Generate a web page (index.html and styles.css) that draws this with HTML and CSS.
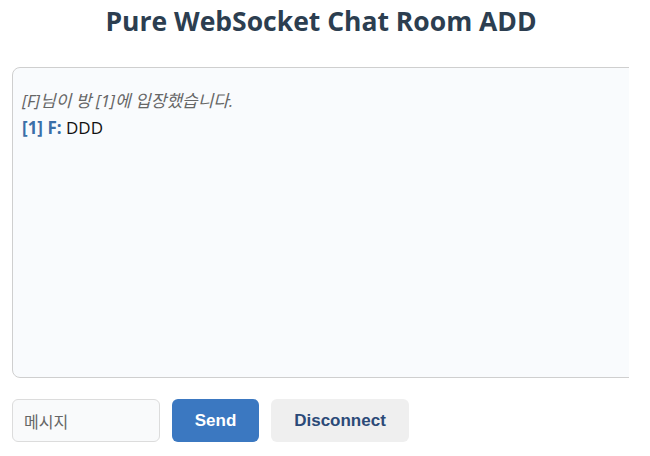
FILE: index.html
```html
<!DOCTYPE html>
<html lang="ko">
<head>
<meta charset="utf-8">
<title>Pure WebSocket Chat Room ADD</title>
<link rel="stylesheet" href="styles.css">
</head>
<body>
<h1 class="title">Pure WebSocket Chat Room ADD</h1>
<div class="chat-clip">
  <div class="chat-box">
    <div class="msg system">[F]님이 방 [1]에 입장했습니다.</div>
    <div class="msg"><span class="who">[1] F:</span> DDD</div>
  </div>
</div>
<div class="controls">
  <input class="msg-input" type="text" placeholder="메시지">
  <button class="btn btn-send">Send</button>
  <button class="btn btn-disconnect">Disconnect</button>
</div>
</body>
</html>
```
FILE: styles.css
```css
html, body {
  margin: 0;
  background: #ffffff;
}
body {
  padding: 0 12px;
  font-family: "Open Sans", "Noto Sans CJK KR", sans-serif;
  overflow: hidden;
}
.title {
  margin: 0 8px 0 0;
  padding-top: 3px;
  height: 64px;
  text-align: center;
  font-size: 26.5px;
  font-weight: 700;
  color: #2c3e50;
  line-height: 36px;
}
.chat-clip {
  width: 617px;
  overflow: hidden;
}
.chat-box {
  width: 700px;
  height: 311px;
  box-sizing: border-box;
  border: 1px solid #cfcfcf;
  border-radius: 8px;
  background: #f9fbfd;
  padding: 21px 9px 19px;
  font-size: 17px;
  color: #111;
}
.msg {
  line-height: 24px;
  margin-bottom: 3px;
}
.msg.system {
  font-style: italic;
  color: #666;
}
.who {
  font-weight: 700;
  color: #3b6fa8;
}
.controls {
  display: flex;
  gap: 12px;
  margin-top: 21px;
}
.msg-input {
  width: 148px;
  height: 43px;
  box-sizing: border-box;
  border: 1px solid #dcdcdc;
  border-radius: 6px;
  background: #f9fafb;
  padding: 0 11px;
  font-family: "Noto Sans CJK KR", sans-serif;
  font-size: 16px;
  color: #333;
}
.msg-input::placeholder {
  color: #666;
}
.btn {
  height: 43px;
  border: none;
  border-radius: 6px;
  font-family: "Liberation Sans", Arial, sans-serif;
  font-weight: 700;
  font-size: 17px;
  padding: 0;
}
.btn-send {
  width: 87px;
  background: #3b78c1;
  color: #ffffff;
}
.btn-disconnect {
  width: 138px;
  background: #efefef;
  color: #2b4a78;
}
```
